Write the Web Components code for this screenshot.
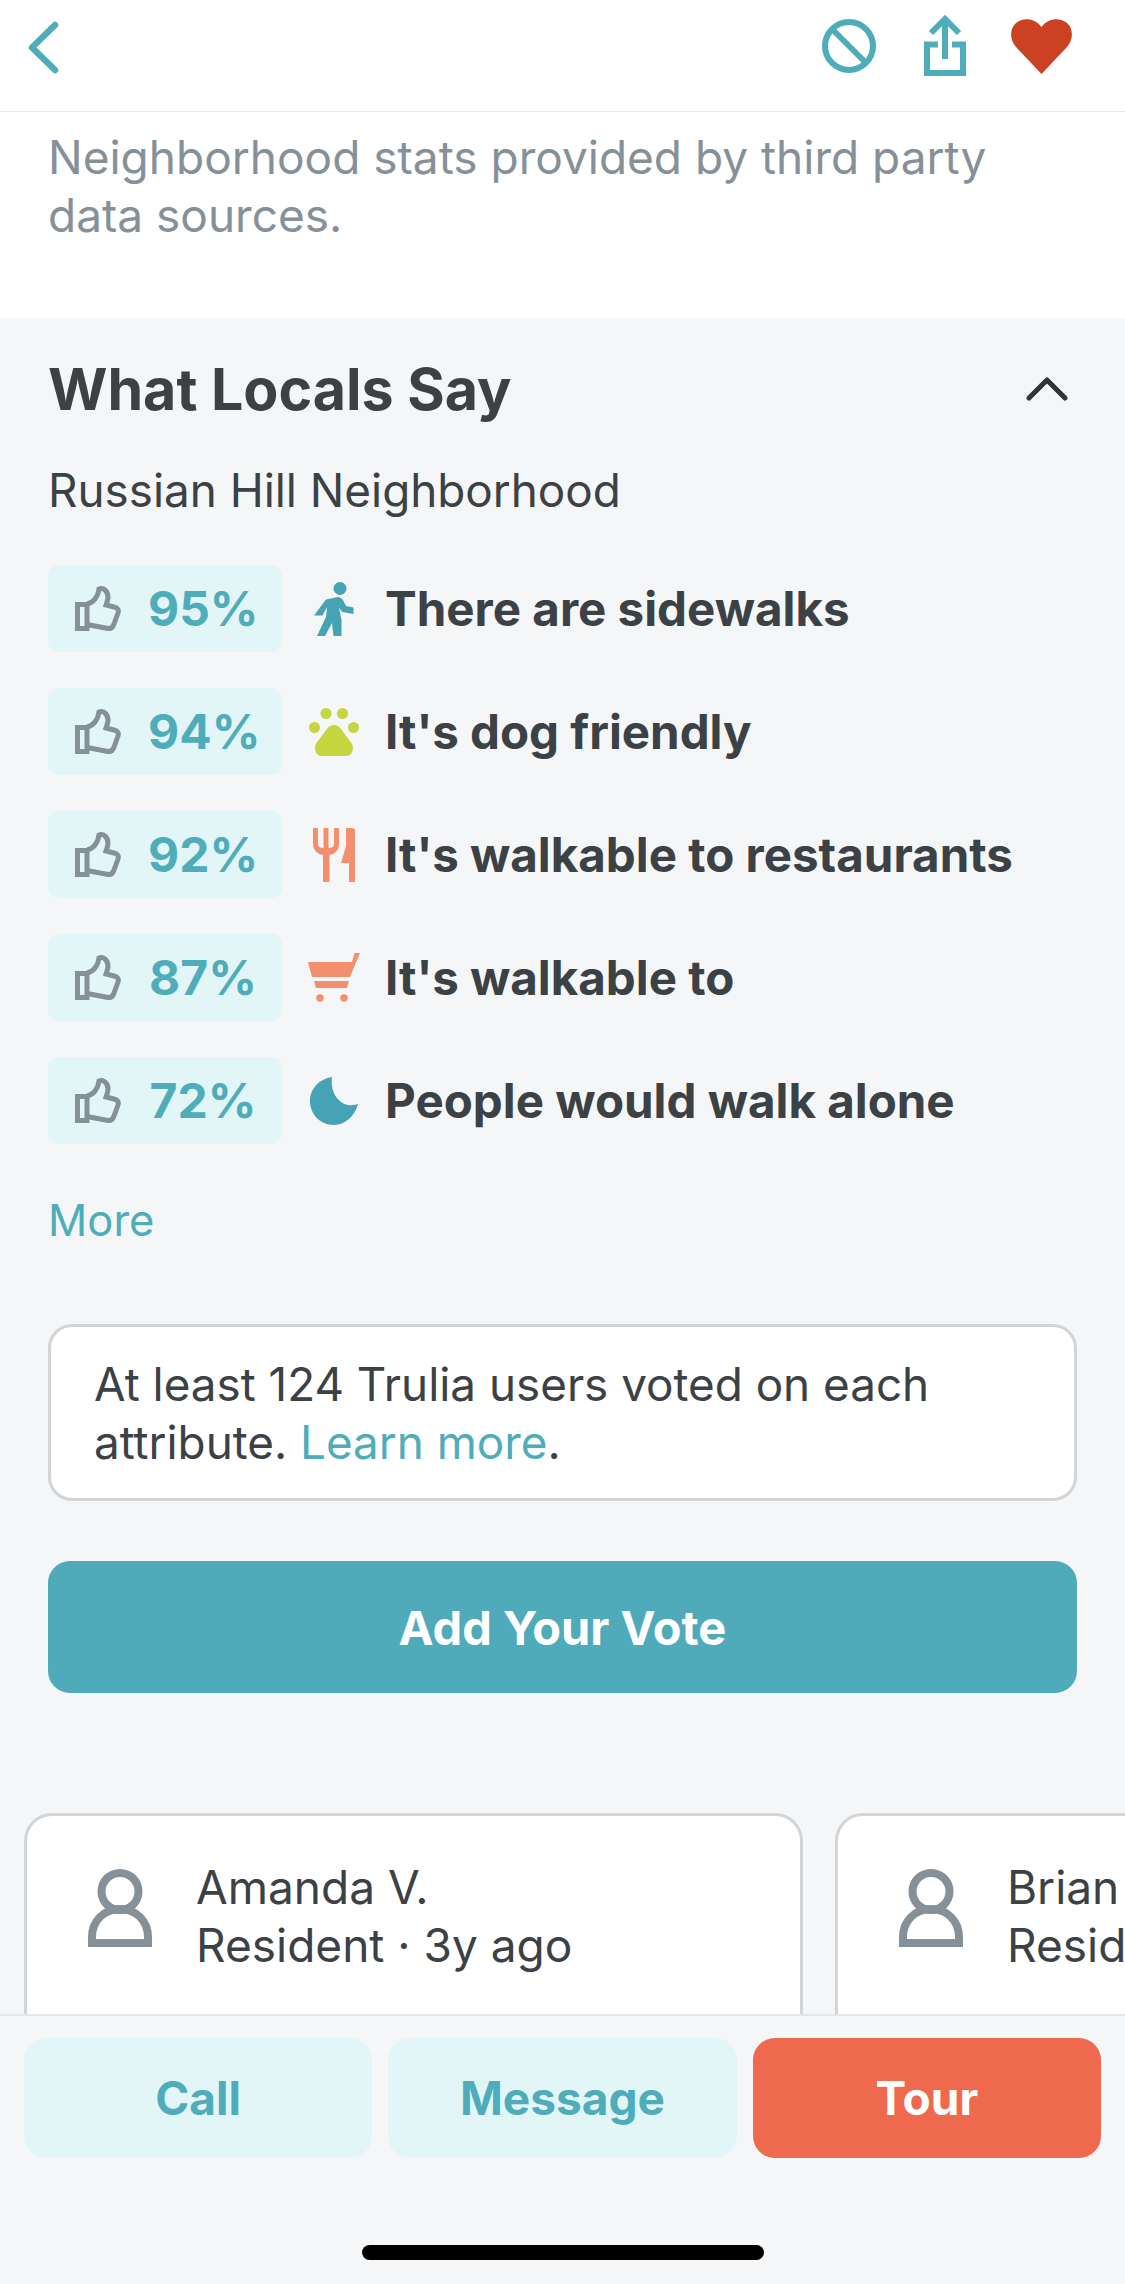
<!DOCTYPE html>
<html lang="en">
<head>
<meta charset="utf-8">
<title>What Locals Say</title>
<style>
  html, body { margin: 0; padding: 0; background: #f4f6f8; }
  body { font-family: Inter, "Liberation Sans", sans-serif; color: #3b4144; }
</style>
</head>
<body>
<app-screen>
  <top-bar slot="top"></top-bar>
  <stats-note>Neighborhood stats provided by third party data sources.</stats-note>
  <locals-panel title="What Locals Say" place="Russian Hill Neighborhood">
    <vote-row percent="95%" icon="walk">There are sidewalks</vote-row>
    <vote-row percent="94%" icon="paw">It's dog friendly</vote-row>
    <vote-row percent="92%" icon="food">It's walkable to restaurants</vote-row>
    <vote-row percent="87%" icon="cart">It's walkable to</vote-row>
    <vote-row percent="72%" icon="moon">People would walk alone</vote-row>
  </locals-panel>
  <review-strip>
    <review-card name="Amanda V." meta="Resident · 3y ago"></review-card>
    <review-card name="Brian" meta="Resident · 3y ago"></review-card>
  </review-strip>
  <action-bar slot="bottom"></action-bar>
</app-screen>

<script>
const ICONS = {
  walk: `<svg width="40" height="54" viewBox="0 0 40 54"><circle cx="26" cy="6.5" r="6.5" fill="#45a3b5"/><path fill="#45a3b5" d="M12 17.500 L24 15 Q27 15 29 18 L32 24 L39.500 25.500 V32 L28.500 30 L25 26 L27.500 38 V54 H19.500 L18 41 L11 54 H3 L12 35 L13 25 L8.500 33.500 H0 Z"/></svg>`,
  paw: `<svg width="50" height="48" viewBox="0 0 50 48"><g fill="#c5d63f"><circle cx="5.500" cy="19.500" r="5.500"/><circle cx="17" cy="5.500" r="5.500"/><circle cx="33.500" cy="5.500" r="5.500"/><circle cx="44.500" cy="19.500" r="5.500"/><path d="M25 17 C30 17 32 21 35 25 L42.500 35 C46 41 43 48 37 48 H13 C7 48 4 41 7.500 35 L15 25 C18 21 20 17 25 17 Z"/></g></svg>`,
  food: `<svg width="42" height="54" viewBox="0 0 42 54"><g fill="#f48f6d"><path d="M0 1.500 a2.500 2.500 0 0 1 5 0 V16 Q5 20 10.500 20 V1.500 a2.500 2.500 0 0 1 5 0 V20 Q21 20 21 16 V1.500 a2.500 2.500 0 0 1 5 0 V16 Q26 25 16.500 27 V54 H10 V27 Q0 25 0 16 Z"/><path d="M33 0 H39 Q42 0 42 3 V54 H36 V35 H28 L33 18 Z"/></g></svg>`,
  cart: `<svg width="52" height="49" viewBox="0 0 52 49"><g fill="#f48f6d"><path d="M0 9 H44 L46.500 0 H52 L42 24 H4 Z"/><path d="M6 28 H41 L39 35 H8 Z"/><circle cx="12" cy="45" r="3.800"/><circle cx="36" cy="45" r="3.800"/></g></svg>`,
  moon: `<svg width="48" height="48" viewBox="0 0 48 48"><path fill="#45a3b5" d="M22 0 C20 13 27 26 38 28 C42 28.500 45 28 48 27 C45 39 35 48 24 48 C10 48 0 37 0 24 C0 12 9 2 22 0 Z"/></svg>`
};

class TopBar extends HTMLElement {
  constructor() {
    super();
    this.attachShadow({ mode: "open" });
  }
  connectedCallback() {
    this.shadowRoot.innerHTML = /*html*/ `
      <style>
        :host { display: flex; align-items: flex-start; justify-content: space-between; height: 111px; box-sizing: content-box; background: #fff; border-bottom: 1px solid #e4e6e8; padding: 0 53px 0 28px; }
        .back { margin-top: 21px; }
        .actions { display: flex; align-items: flex-start; }
        .ban { margin: 19px 48px 0 0; }
        .share { margin: 15px 45px 0 0; }
        .heart { margin-top: 19px; }
        svg { display: block; }
      </style>
      <svg class="back" width="31" height="53" viewBox="0 0 31 53" fill="none" stroke="#4facbb" stroke-width="6.500" stroke-linecap="round" stroke-linejoin="round"><path d="M27 4 L4 26.500 L27 49"/></svg>
      <div class="actions">
        <svg class="ban" width="54" height="54" viewBox="0 0 54 54" fill="none" stroke="#4facbb" stroke-width="6"><circle cx="27" cy="27" r="24"/><path d="M10 10 L44 44"/></svg>
        <svg class="share" width="42" height="61" viewBox="0 0 42 61" fill="none" stroke="#4facbb" stroke-width="6"><path d="M14 29.500 H3 V58 H39 V29.500 H28"/><path d="M21 44 V4"/><path d="M7 18 L21 4 L35 18"/></svg>
        <svg class="heart" width="61" height="55" viewBox="0 0 61 55"><path fill="#cc4121" d="M30.500 55 L5 28 C-2 20 -1 9 5 4 C12 -2 24 -1 30.500 8 C37 -1 49 -2 56 4 C62 9 63 20 56 28 Z"/></svg>
      </div>
    `;
  }
}

class StatsNote extends HTMLElement {
  constructor() {
    super();
    this.attachShadow({ mode: "open" });
  }
  connectedCallback() {
    this.shadowRoot.innerHTML = /*html*/ `
      <style>
        :host { display: block; background: #fff; color: #869099; font-size: 46px; line-height: 58px; padding: 16px 90px 58px 48px; height: 132px; }
      </style>
      <slot></slot>
    `;
  }
}

class VoteRow extends HTMLElement {
  constructor() {
    super();
    this.attachShadow({ mode: "open" });
  }
  connectedCallback() {
    const percent = this.getAttribute("percent");
    const icon = ICONS[this.getAttribute("icon")];
    this.shadowRoot.innerHTML = /*html*/ `
      <style>
        :host { display: flex; align-items: center; height: 87px; }
        .pill { box-sizing: border-box; width: 234px; height: 87px; background: #e2f6f8; border-radius: 10px; display: flex; align-items: center; padding-left: 27px; gap: 27px; flex: none; }
        .pill svg { display: block; }
        .percent { color: #4facbb; font-size: 48px; font-weight: 700; width: 110px; text-align: center; white-space: nowrap; }
        .icon { width: 53px; margin: 0 25px 0 25px; display: flex; justify-content: center; flex: none; }
        .label { font-size: 47.500px; font-weight: 700; white-space: nowrap; }
      </style>
      <div class="pill">
        <svg width="46" height="46" viewBox="0 0 46 46" fill="none" stroke="#869099" stroke-width="5"><path d="M2.500 18.500 H12 V42.500 H2.500 Z"/><path d="M12 18 C18 17 23 11 24 3 C29 1 33 6 33 11 C33 14 32 16 31 19 L39 21 C43 22 44 24 43 27 L39 38 C38 41 36 43 33 42.500 L12 38.500"/></svg>
        <span class="percent">${percent}</span>
      </div>
      <div class="icon">${icon}</div>
      <div class="label"><slot></slot></div>
    `;
  }
}

class LocalsPanel extends HTMLElement {
  constructor() {
    super();
    this.attachShadow({ mode: "open" });
  }
  connectedCallback() {
    this.shadowRoot.innerHTML = /*html*/ `
      <style>
        :host { display: block; padding: 0 48px; }
        .head { display: flex; align-items: center; justify-content: space-between; height: 60px; margin-top: 41px; padding-right: 9px; }
        h2 { margin: 0; font-size: 57.300px; font-weight: 700; line-height: 60px; }
        .place { font-size: 45.800px; line-height: 58px; margin-top: 43px; }
        .rows { display: flex; flex-direction: column; gap: 36px; margin-top: 45px; }
        .more { color: #4facbb; font-size: 43.500px; line-height: 58px; margin-top: 47px; }
        .box { box-sizing: border-box; height: 177px; margin-top: 75px; background: #fff; border: 3px solid #d2d5d8; border-radius: 24px; padding: 29px 43px; font-size: 45.800px; line-height: 58px; }
        .box span { color: #4facbb; }
        .vote { margin-top: 60px; height: 132px; border-radius: 22px; background: #4faaba; color: #fff; font-size: 47px; font-weight: 700; display: flex; align-items: center; justify-content: center; }
      </style>
      <div class="head">
        <h2>${this.getAttribute("title")}</h2>
        <svg width="42" height="24" viewBox="0 0 42 24" fill="none" stroke="#2f3538" stroke-width="5" stroke-linecap="round" stroke-linejoin="round"><path d="M3 21 L21 3 L39 21"/></svg>
      </div>
      <div class="place">${this.getAttribute("place")}</div>
      <div class="rows"><slot></slot></div>
      <div class="more">More</div>
      <div class="box">At least 124 Trulia users voted on each attribute. <span>Learn more</span>.</div>
      <div class="vote">Add Your Vote</div>
    `;
  }
}

class ReviewStrip extends HTMLElement {
  constructor() {
    super();
    this.attachShadow({ mode: "open" });
  }
  connectedCallback() {
    this.shadowRoot.innerHTML = /*html*/ `
      <style>
        :host { display: flex; gap: 32px; padding-left: 24px; margin-top: 120px; }
      </style>
      <slot></slot>
    `;
  }
}

class ReviewCard extends HTMLElement {
  constructor() {
    super();
    this.attachShadow({ mode: "open" });
  }
  connectedCallback() {
    this.shadowRoot.innerHTML = /*html*/ `
      <style>
        :host { display: flex; flex: none; box-sizing: border-box; width: 779px; height: 300px; background: #fff; border: 3px solid #d2d5d8; border-radius: 28px; padding: 42px 0 0 61px; gap: 44px; font-size: 46px; line-height: 58px; }
        svg { display: block; margin-top: 11px; flex: none; }
        .text { white-space: nowrap; }
      </style>
      <svg width="64" height="78" viewBox="0 0 64 78" fill="none" stroke="#869099" stroke-width="8"><path d="M4 74 V68 C4 52 16 40 32 40 C48 40 60 52 60 68 V74 Z"/><circle cx="32" cy="22.500" r="18.500"/></svg>
      <div class="text">
        <div>${this.getAttribute("name")}</div>
        <div>${this.getAttribute("meta")}</div>
      </div>
    `;
  }
}

class ActionBar extends HTMLElement {
  constructor() {
    super();
    this.attachShadow({ mode: "open" });
  }
  connectedCallback() {
    this.shadowRoot.innerHTML = /*html*/ `
      <style>
        :host { display: block; flex: none; height: 270px; box-sizing: border-box; background: #f4f6f8; border-top: 2px solid #e4e6e8; padding: 22px 24px 0 24px; }
        .buttons { display: flex; gap: 16px; }
        .btn { flex: 1; height: 120px; border-radius: 22px; display: flex; align-items: center; justify-content: center; font-size: 46px; font-weight: 700; background: #e2f6f8; color: #4facbb; }
        .btn.tour { background: #ee694d; color: #fff; }
        .home { width: 402px; height: 15px; background: #000; border-radius: 8px; margin: 87px auto 0 auto; }
      </style>
      <div class="buttons">
        <div class="btn">Call</div>
        <div class="btn">Message</div>
        <div class="btn tour">Tour</div>
      </div>
      <div class="home"></div>
    `;
  }
}

class AppScreen extends HTMLElement {
  constructor() {
    super();
    this.attachShadow({ mode: "open" });
  }
  connectedCallback() {
    this.shadowRoot.innerHTML = /*html*/ `
      <style>
        :host { display: flex; flex-direction: column; width: 1125px; height: 2284px; overflow: hidden; background: #f4f6f8; }
        .scroll { flex: 1; min-height: 0; overflow: hidden; }
      </style>
      <slot name="top"></slot>
      <div class="scroll"><slot></slot></div>
      <slot name="bottom"></slot>
    `;
  }
}

customElements.define("top-bar", TopBar);
customElements.define("stats-note", StatsNote);
customElements.define("vote-row", VoteRow);
customElements.define("locals-panel", LocalsPanel);
customElements.define("review-strip", ReviewStrip);
customElements.define("review-card", ReviewCard);
customElements.define("action-bar", ActionBar);
customElements.define("app-screen", AppScreen);
</script>
</body>
</html>
